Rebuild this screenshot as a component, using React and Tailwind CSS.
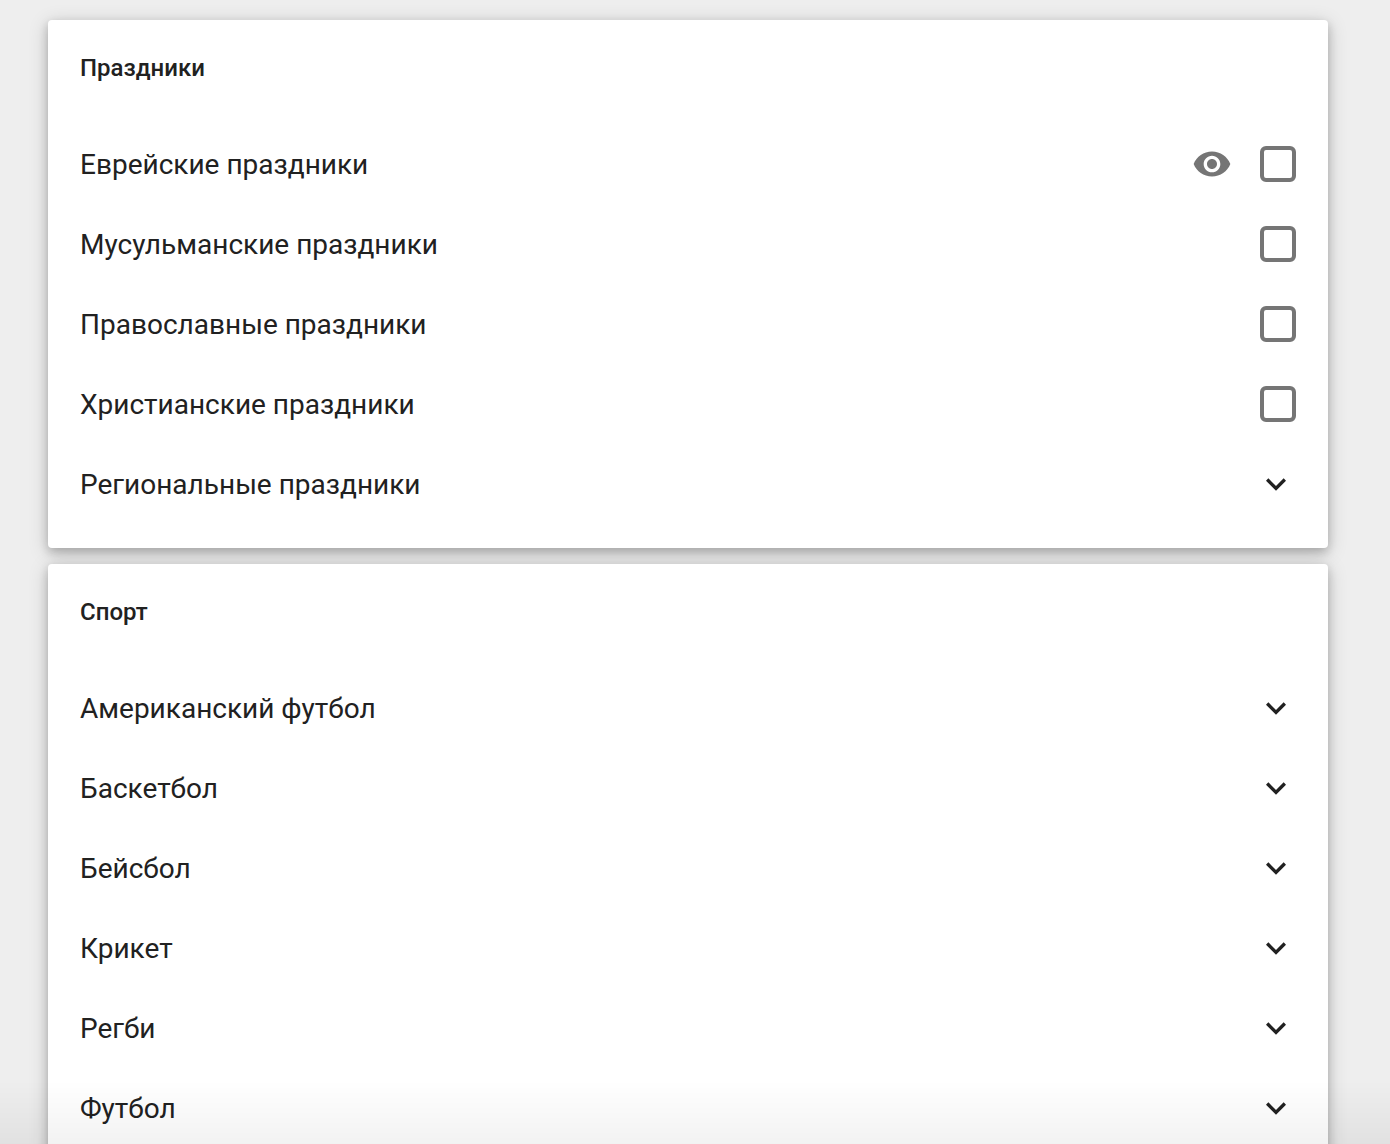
import { useState } from 'react';

const SECTIONS = [
  {
    id: 'holidays',
    title: 'Праздники',
    items: [
      { id: 'jewish', label: 'Еврейские праздники', type: 'calendar', preview: true },
      { id: 'muslim', label: 'Мусульманские праздники', type: 'calendar' },
      { id: 'orthodox', label: 'Православные праздники', type: 'calendar' },
      { id: 'christian', label: 'Христианские праздники', type: 'calendar' },
      { id: 'regional', label: 'Региональные праздники', type: 'group' },
    ],
  },
  {
    id: 'sports',
    title: 'Спорт',
    items: [
      { id: 'american-football', label: 'Американский футбол', type: 'group' },
      { id: 'basketball', label: 'Баскетбол', type: 'group' },
      { id: 'baseball', label: 'Бейсбол', type: 'group' },
      { id: 'cricket', label: 'Крикет', type: 'group' },
      { id: 'rugby', label: 'Регби', type: 'group' },
      { id: 'football', label: 'Футбол', type: 'group' },
    ],
  },
];

// ── Icons ────────────────────────────────────────────────────
function EyeIcon() {
  return (
    <svg viewBox="0 0 24 24" className="size-10 fill-[#757575]" aria-hidden="true">
      <path d="M12 4.5C7 4.5 2.73 7.61 1 12c1.73 4.39 6 7.5 11 7.5s9.27-3.11 11-7.5c-1.73-4.39-6-7.5-11-7.5zM12 17c-2.76 0-5-2.24-5-5s2.24-5 5-5 5 2.24 5 5-2.24 5-5 5zm0-8c-1.66 0-3 1.34-3 3s1.34 3 3 3 3-1.34 3-3-1.34-3-3-3z" />
    </svg>
  );
}

function ChevronIcon({ open }) {
  return (
    <svg
      viewBox="0 0 24 24"
      className={`size-10 shrink-0 fill-[#212121] ${open ? 'rotate-180' : ''}`}
      aria-hidden="true"
    >
      <path d="M7.41 8.59L12 13.17l4.59-4.58L18 10l-6 6-6-6 1.41-1.41z" />
    </svg>
  );
}

// ── Rows ─────────────────────────────────────────────────────
function CalendarRow({ item, checked, onToggle }) {
  return (
    <li className="flex h-20 items-center gap-7 px-8">
      <label htmlFor={item.id} className="flex-1 cursor-pointer pt-0.5">
        {item.label}
      </label>
      {item.preview && (
        <button type="button" aria-label={`Просмотр: ${item.label}`} className="shrink-0 cursor-pointer">
          <EyeIcon />
        </button>
      )}
      <input
        id={item.id}
        type="checkbox"
        checked={checked}
        onChange={onToggle}
        className="size-9 shrink-0 cursor-pointer appearance-none rounded-md border-4 border-[#757575] checked:bg-[#757575]"
      />
    </li>
  );
}

function GroupRow({ item, open, onToggle }) {
  return (
    <li>
      <button
        type="button"
        aria-expanded={open}
        onClick={onToggle}
        className="flex h-20 w-full cursor-pointer items-center justify-between px-8 text-left"
      >
        <span className="pt-0.5">{item.label}</span>
        <ChevronIcon open={open} />
      </button>
    </li>
  );
}

// ── Main component ───────────────────────────────────────────
export default function App() {
  const [active, setActive] = useState({});

  const toggle = (id) => setActive((prev) => ({ ...prev, [id]: !prev[id] }));

  return (
    <div className="h-screen overflow-y-auto bg-[#eeeeee] font-['Roboto','Noto_Sans',sans-serif] text-[#212121] [scrollbar-width:none]">
      <main className="flex flex-col gap-4 pt-5 pr-[62px] pb-5 pl-12">
        {SECTIONS.map((section) => (
          <section
            key={section.id}
            className="rounded-sm bg-white pt-9 pb-6 shadow-[0_4px_10px_rgba(0,0,0,0.2),0_4px_20px_rgba(0,0,0,0.19)]"
          >
            <h2 className="px-8 pb-11 text-2xl/6 font-medium">{section.title}</h2>
            <ul className="text-[28px]/8">
              {section.items.map((item) =>
                item.type === 'calendar' ? (
                  <CalendarRow
                    key={item.id}
                    item={item}
                    checked={!!active[item.id]}
                    onToggle={() => toggle(item.id)}
                  />
                ) : (
                  <GroupRow
                    key={item.id}
                    item={item}
                    open={!!active[item.id]}
                    onToggle={() => toggle(item.id)}
                  />
                )
              )}
            </ul>
          </section>
        ))}
      </main>

      {/* Fade along the bottom edge of the window */}
      <div className="pointer-events-none fixed inset-x-0 bottom-0 h-16 bg-linear-to-t from-black/5 to-transparent" />
    </div>
  );
}
